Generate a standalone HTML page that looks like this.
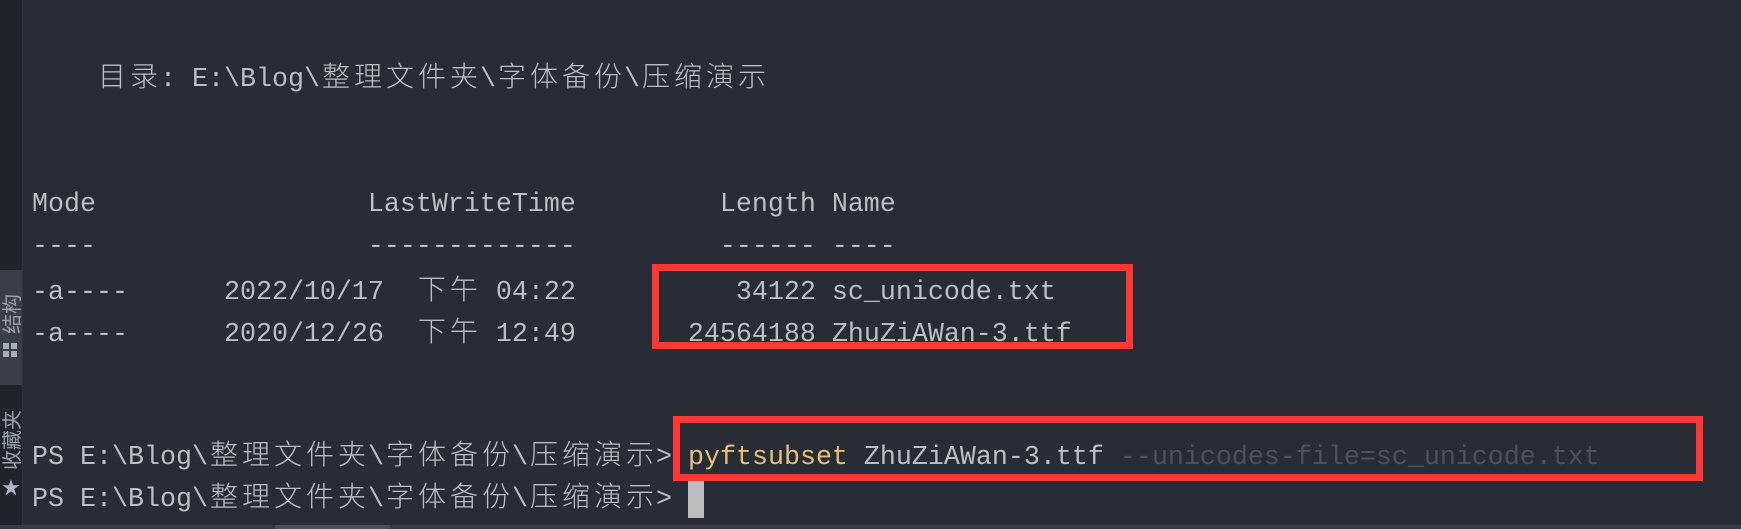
<!DOCTYPE html>
<html><head><meta charset="utf-8"><style>
body{margin:0;width:1741px;height:529px;background:#282c34;overflow:hidden;position:relative;font-family:"Liberation Mono","Noto Sans CJK SC",monospace;}
.side{position:absolute;left:0;top:0;width:22px;height:529px;background:#21252b;border-right:1px solid #30343c;}
.tab{position:absolute;left:0;top:270px;width:22px;height:115px;background:#3a3e46;}
.vt{position:absolute;font-family:"Noto Sans CJK SC",sans-serif;font-size:20px;line-height:20px;color:#9aa1ad;transform:rotate(-90deg);transform-origin:left top;white-space:nowrap;}
.l{position:absolute;left:32px;height:40px;line-height:40px;font-size:26.667px;color:#bbbec4;white-space:pre;}
.c{display:inline-block;width:32px;text-align:center;font-family:"Noto Sans CJK SC",sans-serif;font-size:28px;font-weight:300;}
.y{color:#e5c07b}.d{color:#4b515d}
.box{position:absolute;border:7px solid #fd3636;box-sizing:border-box;}
.cur{position:absolute;left:688px;top:481px;width:16px;height:37px;background:#bdbdbd;}
.sb{position:absolute;left:0;top:525px;width:1741px;height:4px;background:#353a44;}
.th{position:absolute;left:275px;top:525px;width:115px;height:4px;background:#4a505a;}
</style></head><body>
<div class="side"></div><div class="tab"></div>
<div class="vt" style="left:1px;top:334px">结构</div>
<div style="position:absolute;left:3px;top:343px;width:6px;height:6px;background:#a8aeb8"></div>
<div style="position:absolute;left:11px;top:343px;width:6px;height:6px;background:#a8aeb8"></div>
<div style="position:absolute;left:3px;top:351px;width:6px;height:6px;background:#a8aeb8"></div>
<div style="position:absolute;left:11px;top:351px;width:6px;height:6px;background:#a8aeb8"></div>
<div class="vt" style="left:1px;top:470px">收藏夹</div>
<div style="position:absolute;left:0;top:476px;width:22px;text-align:center;color:#b0b6c0;font-size:22px;font-family:'DejaVu Sans'">★</div>

<div class="l" style="top:55px">    <span class="c">目</span><span class="c">录</span>: E:\Blog\<span class="c">整</span><span class="c">理</span><span class="c">文</span><span class="c">件</span><span class="c">夹</span>\<span class="c">字</span><span class="c">体</span><span class="c">备</span><span class="c">份</span>\<span class="c">压</span><span class="c">缩</span><span class="c">演</span><span class="c">示</span></div>
<div class="l" style="top:185px">Mode                 LastWriteTime         Length Name</div>
<div class="l" style="top:227px">----                 -------------         ------ ----</div>
<div class="l" style="top:268px">-a----      2022/10/17  <span class="c">下</span><span class="c">午</span> 04:22          34122 sc_unicode.txt</div>
<div class="l" style="top:310px">-a----      2020/12/26  <span class="c">下</span><span class="c">午</span> 12:49       24564188 ZhuZiAWan-3.ttf</div>
<div class="l" style="top:433px">PS E:\Blog\<span class="c">整</span><span class="c">理</span><span class="c">文</span><span class="c">件</span><span class="c">夹</span>\<span class="c">字</span><span class="c">体</span><span class="c">备</span><span class="c">份</span>\<span class="c">压</span><span class="c">缩</span><span class="c">演</span><span class="c">示</span>&gt; <span class="y">pyftsubset</span> ZhuZiAWan-3.ttf <span class="d">--unicodes-file=sc_unicode.txt</span></div>
<div class="l" style="top:475px">PS E:\Blog\<span class="c">整</span><span class="c">理</span><span class="c">文</span><span class="c">件</span><span class="c">夹</span>\<span class="c">字</span><span class="c">体</span><span class="c">备</span><span class="c">份</span>\<span class="c">压</span><span class="c">缩</span><span class="c">演</span><span class="c">示</span>&gt;</div>
<div class="cur"></div>
<div class="box" style="left:652px;top:264px;width:481px;height:85px"></div>
<div class="box" style="left:673px;top:416px;width:1030px;height:65px"></div>
<div class="sb"></div><div class="th"></div>
</body></html>
